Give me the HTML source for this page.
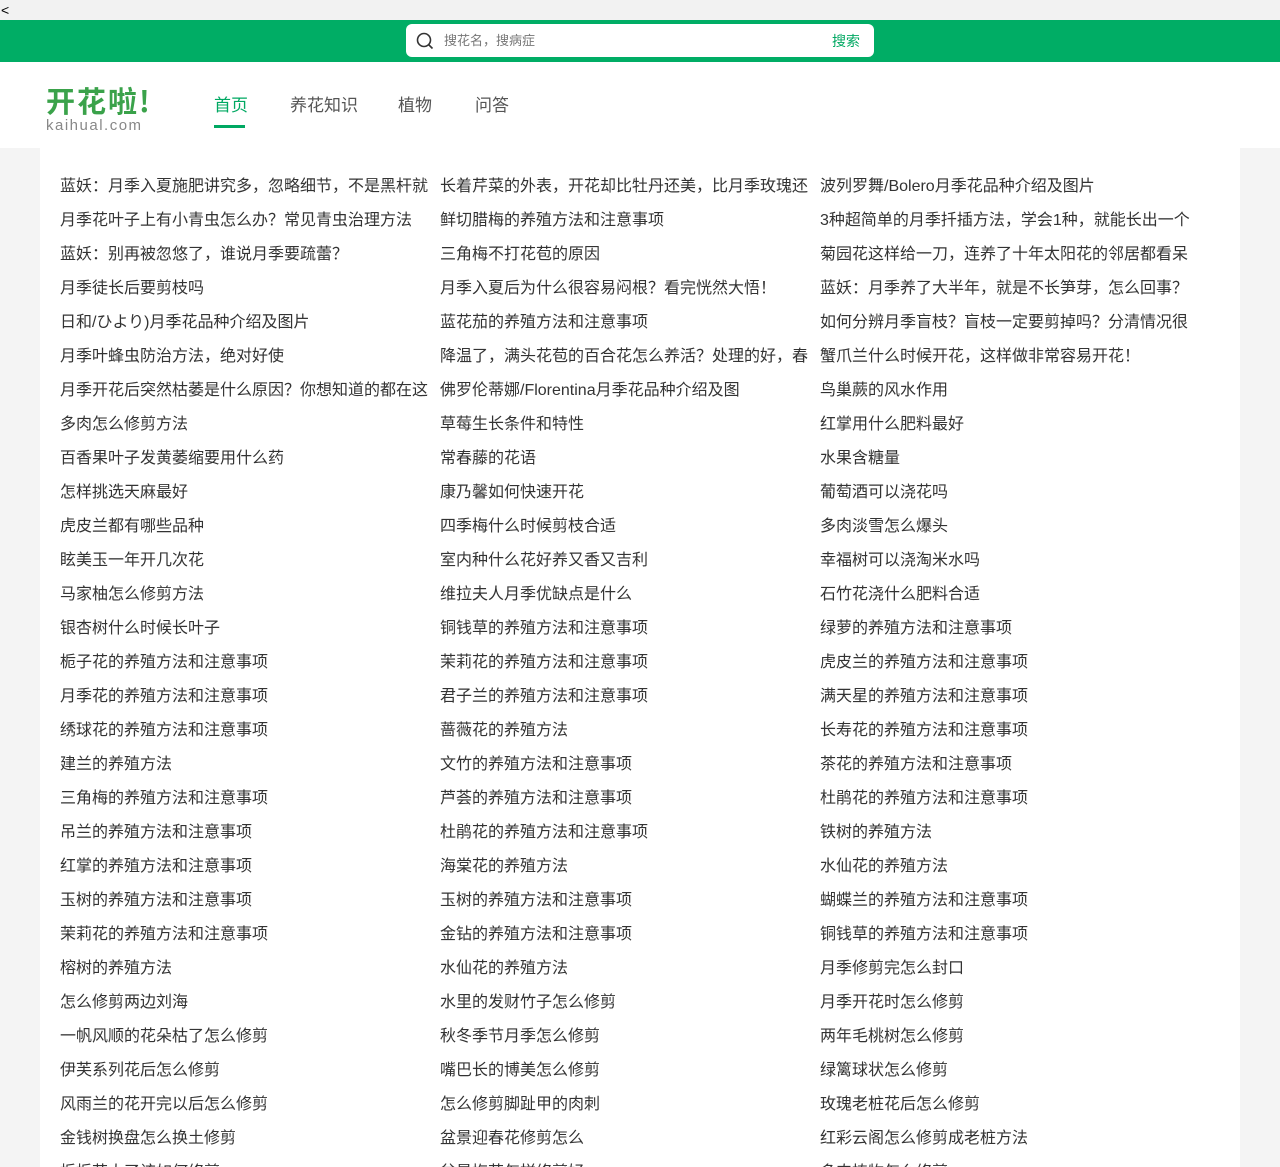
<!DOCTYPE html>
<html style="width:1280px;height:1167px;overflow:hidden"><head><meta charset="utf-8"><style>
*{margin:0;padding:0;box-sizing:border-box}
body{width:1280px;height:1167px;overflow:hidden;background:#f4f4f4;font-family:"Liberation Sans","Noto Sans CJK SC",sans-serif;color:#333;position:relative}
.top{height:20px;background:#f2f2f2;font-size:14px;line-height:20px;padding-left:1px;color:#000}
.bar{height:42px;background:#00ad65;position:relative}
.search{position:absolute;left:406px;top:4px;width:468px;height:33px;background:#fff;border-radius:6px}
.search svg{position:absolute;left:10px;top:8px}
.search .ph{position:absolute;left:38px;top:0;line-height:33px;font-size:13px;color:#777}
.search .btn{position:absolute;right:14px;top:1px;line-height:33px;font-size:14px;color:#00a862}
.hdr{height:86px;background:#fff;position:relative}
.logo{position:absolute;left:46px;top:22px}
.logo .cn{font-size:29px;font-weight:bold;color:#3aa24a;letter-spacing:2px;line-height:32px;font-family:"Noto Sans CJK SC",sans-serif}
.logo .en{font-size:15px;color:#888;letter-spacing:1.5px;line-height:18px;margin-top:1px}
.nav a{position:absolute;top:33px;font-size:17px;color:#555;text-decoration:none;line-height:22px}
.nav a.on{color:#00a862}
.ul{position:absolute;left:214px;top:63px;width:31px;height:3px;background:#00a862}
.main{position:absolute;left:40px;top:148px;width:1200px;height:1019px;overflow:hidden;background:#fff;padding:21px 0 0 20px}
.list{display:flex;flex-wrap:wrap;width:1160px}
.list div{width:380px;height:34px;line-height:36px;font-size:16px;white-space:nowrap;overflow:hidden;padding-right:10px}
</style></head><body>
<div class="top">&lt;</div>
<div class="bar"><div class="search">
<svg width="18" height="18" viewBox="0 0 18 18"><circle cx="8" cy="8" r="6.5" fill="none" stroke="#333" stroke-width="1.6"/><path d="M12.5 12.5L16.5 16.5" stroke="#333" stroke-width="1.6"/></svg>
<span class="ph">搜花名，搜病症</span><span class="btn">搜索</span></div></div>
<div class="hdr">
<div class="logo"><div class="cn">开花啦!</div><div class="en">kaihual.com</div></div>
<div class="nav"><a class="on" style="left:214px">首页</a><a style="left:290px">养花知识</a><a style="left:398px">植物</a><a style="left:475px">问答</a></div>
<div class="ul"></div>
</div>
<div class="main"><div class="list">
<div>蓝妖：月季入夏施肥讲究多，忽略细节，不是黑杆就</div><div>长着芹菜的外表，开花却比牡丹还美，比月季玫瑰还</div><div>波列罗舞/Bolero月季花品种介绍及图片</div>
<div>月季花叶子上有小青虫怎么办？常见青虫治理方法</div><div>鲜切腊梅的养殖方法和注意事项</div><div>3种超简单的月季扦插方法，学会1种，就能长出一个</div>
<div>蓝妖：别再被忽悠了，谁说月季要疏蕾？</div><div>三角梅不打花苞的原因</div><div>菊园花这样给一刀，连养了十年太阳花的邻居都看呆</div>
<div>月季徒长后要剪枝吗</div><div>月季入夏后为什么很容易闷根？看完恍然大悟！</div><div>蓝妖：月季养了大半年，就是不长笋芽，怎么回事？</div>
<div>日和/ひより)月季花品种介绍及图片</div><div>蓝花茄的养殖方法和注意事项</div><div>如何分辨月季盲枝？盲枝一定要剪掉吗？分清情况很</div>
<div>月季叶蜂虫防治方法，绝对好使</div><div>降温了，满头花苞的百合花怎么养活？处理的好，春</div><div>蟹爪兰什么时候开花，这样做非常容易开花！</div>
<div>月季开花后突然枯萎是什么原因？你想知道的都在这</div><div>佛罗伦蒂娜/Florentina月季花品种介绍及图</div><div>鸟巢蕨的风水作用</div>
<div>多肉怎么修剪方法</div><div>草莓生长条件和特性</div><div>红掌用什么肥料最好</div>
<div>百香果叶子发黄萎缩要用什么药</div><div>常春藤的花语</div><div>水果含糖量</div>
<div>怎样挑选天麻最好</div><div>康乃馨如何快速开花</div><div>葡萄酒可以浇花吗</div>
<div>虎皮兰都有哪些品种</div><div>四季梅什么时候剪枝合适</div><div>多肉淡雪怎么爆头</div>
<div>眩美玉一年开几次花</div><div>室内种什么花好养又香又吉利</div><div>幸福树可以浇淘米水吗</div>
<div>马家柚怎么修剪方法</div><div>维拉夫人月季优缺点是什么</div><div>石竹花浇什么肥料合适</div>
<div>银杏树什么时候长叶子</div><div>铜钱草的养殖方法和注意事项</div><div>绿萝的养殖方法和注意事项</div>
<div>栀子花的养殖方法和注意事项</div><div>茉莉花的养殖方法和注意事项</div><div>虎皮兰的养殖方法和注意事项</div>
<div>月季花的养殖方法和注意事项</div><div>君子兰的养殖方法和注意事项</div><div>满天星的养殖方法和注意事项</div>
<div>绣球花的养殖方法和注意事项</div><div>蔷薇花的养殖方法</div><div>长寿花的养殖方法和注意事项</div>
<div>建兰的养殖方法</div><div>文竹的养殖方法和注意事项</div><div>茶花的养殖方法和注意事项</div>
<div>三角梅的养殖方法和注意事项</div><div>芦荟的养殖方法和注意事项</div><div>杜鹃花的养殖方法和注意事项</div>
<div>吊兰的养殖方法和注意事项</div><div>杜鹃花的养殖方法和注意事项</div><div>铁树的养殖方法</div>
<div>红掌的养殖方法和注意事项</div><div>海棠花的养殖方法</div><div>水仙花的养殖方法</div>
<div>玉树的养殖方法和注意事项</div><div>玉树的养殖方法和注意事项</div><div>蝴蝶兰的养殖方法和注意事项</div>
<div>茉莉花的养殖方法和注意事项</div><div>金钻的养殖方法和注意事项</div><div>铜钱草的养殖方法和注意事项</div>
<div>榕树的养殖方法</div><div>水仙花的养殖方法</div><div>月季修剪完怎么封口</div>
<div>怎么修剪两边刘海</div><div>水里的发财竹子怎么修剪</div><div>月季开花时怎么修剪</div>
<div>一帆风顺的花朵枯了怎么修剪</div><div>秋冬季节月季怎么修剪</div><div>两年毛桃树怎么修剪</div>
<div>伊芙系列花后怎么修剪</div><div>嘴巴长的博美怎么修剪</div><div>绿篱球状怎么修剪</div>
<div>风雨兰的花开完以后怎么修剪</div><div>怎么修剪脚趾甲的肉刺</div><div>玫瑰老桩花后怎么修剪</div>
<div>金钱树换盘怎么换土修剪</div><div>盆景迎春花修剪怎么</div><div>红彩云阁怎么修剪成老桩方法</div>
<div>栀栀花大了该如何修剪</div><div>盆景梅花怎样修剪好</div><div>多肉植物怎么修剪</div>
</div></div>
</body></html>
